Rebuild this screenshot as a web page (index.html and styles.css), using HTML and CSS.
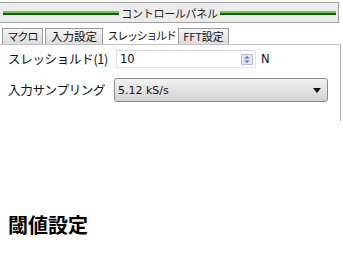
FILE: index.html
```html
<!DOCTYPE html>
<html lang="ja">
<head>
    <meta charset="UTF-8">
    <title>コントロールパネル</title>
    <link rel="stylesheet" href="styles.css">
</head>
<body>
    <div class="titlebar">
        <span class="bar"></span>
        <span class="title">コントロールパネル</span>
        <span class="bar"></span>
    </div>

    <div class="tabs">
        <div class="tab tab-macro">マクロ</div>
        <div class="tab tab-input">入力設定</div>
        <div class="tab tab-threshold active">スレッショルド</div>
        <div class="tab tab-fft">FFT設定</div>
        <div class="tab-fill"></div>
    </div>

    <div class="panel">
        <div class="row">
            <label class="label">スレッショルド(1)</label>
            <div class="spin">
                <span class="value">10</span>
                <span class="spin-btn">
                    <svg width="12" height="11" viewBox="0 0 12 11">
                        <rect x="0.5" y="0.5" width="11" height="10" fill="#dde4ee" stroke="#b8c2d2"/>
                        <path d="M3.5 4.5 L6 2 L8.5 4.5 Z" fill="#5a6f96"/>
                        <path d="M3.5 6.5 L6 9 L8.5 6.5 Z" fill="#5a6f96"/>
                    </svg>
                </span>
            </div>
            <span class="unit">N</span>
        </div>
        <div class="row">
            <label class="label">入力サンプリング</label>
            <div class="select">
                <span class="value">5.12 kS/s</span>
                <span class="arrow"></span>
            </div>
        </div>
    </div>

    <h2 class="heading">閾値設定</h2>
</body>
</html>
```

FILE: styles.css
```css
* {
    margin: 0;
    padding: 0;
    box-sizing: border-box;
}

body {
    width: 343px;
    height: 280px;
    background: white;
    font-family: "Noto Sans CJK JP", "DejaVu Sans", sans-serif;
    color: #111;
    overflow: hidden;
}

.titlebar {
    margin-top: 2px;
    width: 339px;
    height: 21px;
    background: #ececec;
    border-top: 1px solid #a0a0a0;
    border-right: 1px solid #a0a0a0;
    border-bottom: 1px solid #a0a0a0;
    display: flex;
    align-items: center;
    padding: 0 2px 0 3px;
    gap: 2px;
}

.titlebar .bar {
    flex: 1;
    height: 4px;
    background: linear-gradient(#5fd33a 0, #5fd33a 40%, #1b5e20 60%, #1b4a1b 100%);
}

.titlebar .title {
    font-size: 11px;
    line-height: 14px;
    color: #222;
    letter-spacing: -0.3px;
}

.tabs {
    display: flex;
    align-items: flex-end;
    margin-top: 4px;
    height: 17px;
    padding-left: 2px;
}

.tab {
    height: 16px;
    font-size: 11px;
    line-height: 15px;
    text-align: center;
    white-space: nowrap;
    background: linear-gradient(#f4f4f4, #dcdcdc);
    border: 1px solid #9a9a9a;
    border-bottom: none;
    margin-right: 2px;
    color: #111;
}

.tab-macro {
    width: 41px;
    letter-spacing: -1px;
}

.tab-input {
    width: 58px;
    font-size: 11.5px;
}

.tab-threshold {
    width: 73px;
    letter-spacing: -1.3px;
}

.tab-fft {
    width: 51px;
    font-size: 11px;
}

.tab.active {
    height: 17px;
    background: white;
    border-color: transparent;
    margin-right: 0;
}

.tab-fill {
    flex: 1;
}

.panel {
    width: 341px;
    height: 77px;
    border-top: 1px solid #c4c4c4;
    border-right: 1px solid #b0b0b0;
    padding: 5px 0 0 8px;
    display: flex;
    flex-direction: column;
    gap: 9px;
}

.row {
    display: flex;
    align-items: center;
}

.label {
    width: 106px;
    font-size: 12.5px;
    line-height: 18px;
    letter-spacing: -0.3px;
}

.spin {
    width: 140px;
    height: 18px;
    border: 1px solid #e2e2e2;
    border-top-color: #d6d6d6;
    display: flex;
    align-items: center;
    justify-content: space-between;
    padding: 0 2px 0 3px;
    margin-left: 2px;
}

.value {
    font-family: "DejaVu Sans", sans-serif;
    font-size: 11.5px;
}

.spin-btn {
    display: flex;
}

.unit {
    font-family: "DejaVu Sans", sans-serif;
    font-size: 11.5px;
    margin-left: 5px;
}

.select {
    width: 214px;
    height: 24px;
    border: 1px solid #8a8a8a;
    border-radius: 3px;
    background: linear-gradient(#f2f2f2, #e2e2e2 50%, #d4d4d4);
    display: flex;
    align-items: center;
    justify-content: space-between;
    padding: 0 6px 0 3px;
    margin-top: 1px;
}

.select .value {
    font-size: 11px;
}

.select .arrow {
    width: 0;
    height: 0;
    border-left: 4px solid transparent;
    border-right: 4px solid transparent;
    border-top: 5px solid #111;
}

.heading {
    margin: 93px 0 0 8px;
    font-size: 20px;
    font-weight: bold;
    line-height: 22px;
    color: #000;
}
```
